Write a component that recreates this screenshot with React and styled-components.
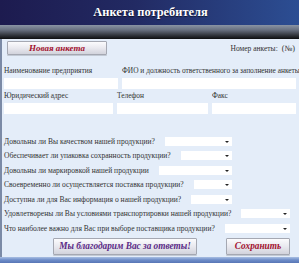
import React from "react";
import styled, { createGlobalStyle } from "styled-components";

const SERIF = `"Liberation Serif", "Times New Roman", serif`;

const Global = createGlobalStyle`
  html, body { margin: 0; padding: 0; background: #e4edf9; }
  body { width: 299px; height: 263px; overflow: hidden; font-family: ${SERIF}; }
  * { box-sizing: border-box; }
`;

const Page = styled.div`
  width: 299px;
  height: 263px;
  display: flex;
  flex-direction: column;
  font-family: ${SERIF};
`;

const Header = styled.div`
  height: 25px;
  display: flex;
  align-items: center;
  justify-content: center;
  background: linear-gradient(90deg, #1d1b4f 0%, #222a63 45%, #2c4e93 100%);
`;

const Title = styled.h1`
  margin: 0 0 0 2px;
  font-family: ${SERIF};
  font-size: 12.4px;
  font-weight: bold;
  color: #fff;
  text-shadow: 0 1px 1px rgba(0,0,0,0.6);
`;

const SubBar = styled.div`
  height: 14px;
  background: linear-gradient(180deg, #8a94a4 0%, #687080 35%, #2e3239 75%, #0d0e10 100%);
`;

const Body = styled.div`
  flex: 1;
  display: flex;
  flex-direction: column;
  background: #e4edf9;
  border-left: 2px solid #7b8aa6;
  padding: 2px 3px 0 2px;
`;

const TopRow = styled.div`
  display: flex;
  align-items: center;
  justify-content: space-between;
  height: 14px;
`;

const Button = styled.button`
  font-family: ${SERIF};
  font-style: italic;
  font-weight: bold;
  font-size: ${p => p.$size}px;
  color: ${p => p.$color};
  height: ${p => p.$h}px;
  width: ${p => p.$w}px;
  margin-left: ${p => p.$ml || 0}px;
  padding: 0;
  border: 1px solid #a5a8b2;
  border-radius: 1px;
  background: linear-gradient(180deg, #fbfbfd 0%, #e9e9ef 50%, #d2d3dc 100%);
  box-shadow: 0 1px 0 rgba(0,0,0,0.15);
  line-height: 1;
`;

const Number = styled.span`
  font-family: ${SERIF};
  font-size: 7.5px;
  color: #333;
  margin-right: 1px;
  b { font-weight: normal; font-size: 8.2px; margin-left: 4px; }
`;

const FieldRow = styled.div`
  display: grid;
  grid-template-columns: ${p => p.$cols};
  column-gap: 4px;
  margin-top: ${p => p.$mt}px;
`;

const Field = styled.div`
  display: flex;
  flex-direction: column;
  min-width: 0;
`;

const Label = styled.label`
  font-family: ${SERIF};
  font-size: 7.4px;
  color: #333;
  height: 12px;
  line-height: 10px;
  white-space: nowrap;
`;

const Input = styled.div`
  height: 11px;
  background: #fff;
`;

const Questions = styled.div`
  display: flex;
  flex-direction: column;
  margin-top: 20px;
`;

const QRow = styled.div`
  display: flex;
  align-items: center;
  height: 14.5px;
  width: ${p => p.$w}px;
`;

const QText = styled.span`
  font-family: ${SERIF};
  font-size: 7.55px;
  color: #333;
  white-space: nowrap;
`;

const Select = styled.span`
  position: relative;
  flex: 1;
  height: 9px;
  margin-left: 10px;
  background: #fff;
  &::after {
    content: "";
    position: absolute;
    right: 3px;
    top: 4px;
    border-left: 2px solid transparent;
    border-right: 2px solid transparent;
    border-top: 2.5px solid #222;
  }
`;

const ButtonRow = styled.div`
  display: flex;
  align-items: center;
  margin-top: 2px;
  height: 18px;
`;

const Footer = styled.div`
  height: 6px;
  background: linear-gradient(180deg, #a9bfe3 0%, #6d8cc8 50%, #5876b5 100%);
`;

const questions = [
  ["Довольны ли Вы качеством нашей продукции?", 228],
  ["Обеспечивает ли упаковка сохранность продукции?", 228],
  ["Довольны ли маркировкой нашей продукции", 228],
  ["Своевременно ли осуществляется поставка продукции?", 228],
  ["Доступна ли для Вас информация о нашей продукции?", 228],
  ["Удовлетворены ли Вы условиями транспортировки нашей продукции?", 286],
  ["Что наиболее важно для Вас при выборе поставщика продукции?", 286],
];

export default function App() {
  return (
    <Page>
      <Global />
      <Header>
        <Title>Анкета потребителя</Title>
      </Header>
      <SubBar />
      <Body>
        <TopRow>
          <Button $color="#a3122f" $size={9} $w={100} $h={14} $ml={3}>Новая анкета</Button>
          <Number>Номер анкеты:<b>(№)</b></Number>
        </TopRow>
        <FieldRow $cols="114px 1fr" $mt={11}>
          <Field>
            <Label>Наименование предприятия</Label>
            <Input />
          </Field>
          <Field>
            <Label>ФИО и должность ответственного за заполнение анкеты</Label>
            <Input />
          </Field>
        </FieldRow>
        <FieldRow $cols="109px 91px 1fr" $mt={2}>
          <Field>
            <Label>Юридический адрес</Label>
            <Input />
          </Field>
          <Field>
            <Label>Телефон</Label>
            <Input />
          </Field>
          <Field>
            <Label>Факс</Label>
            <Input />
          </Field>
        </FieldRow>
        <Questions>
          {questions.map(([q, w]) => (
            <QRow key={q} $w={w}>
              <QText>{q}</QText>
              <Select />
            </QRow>
          ))}
        </Questions>
        <ButtonRow>
          <Button $color="#5b2a86" $size={9.3} $w={144} $h={17} $ml={49}>Мы благодарим Вас за ответы!</Button>
          <Button $color="#a3122f" $size={9.3} $w={64} $h={17} $ml={29}>Сохранить</Button>
        </ButtonRow>
      </Body>
      <Footer />
    </Page>
  );
}
